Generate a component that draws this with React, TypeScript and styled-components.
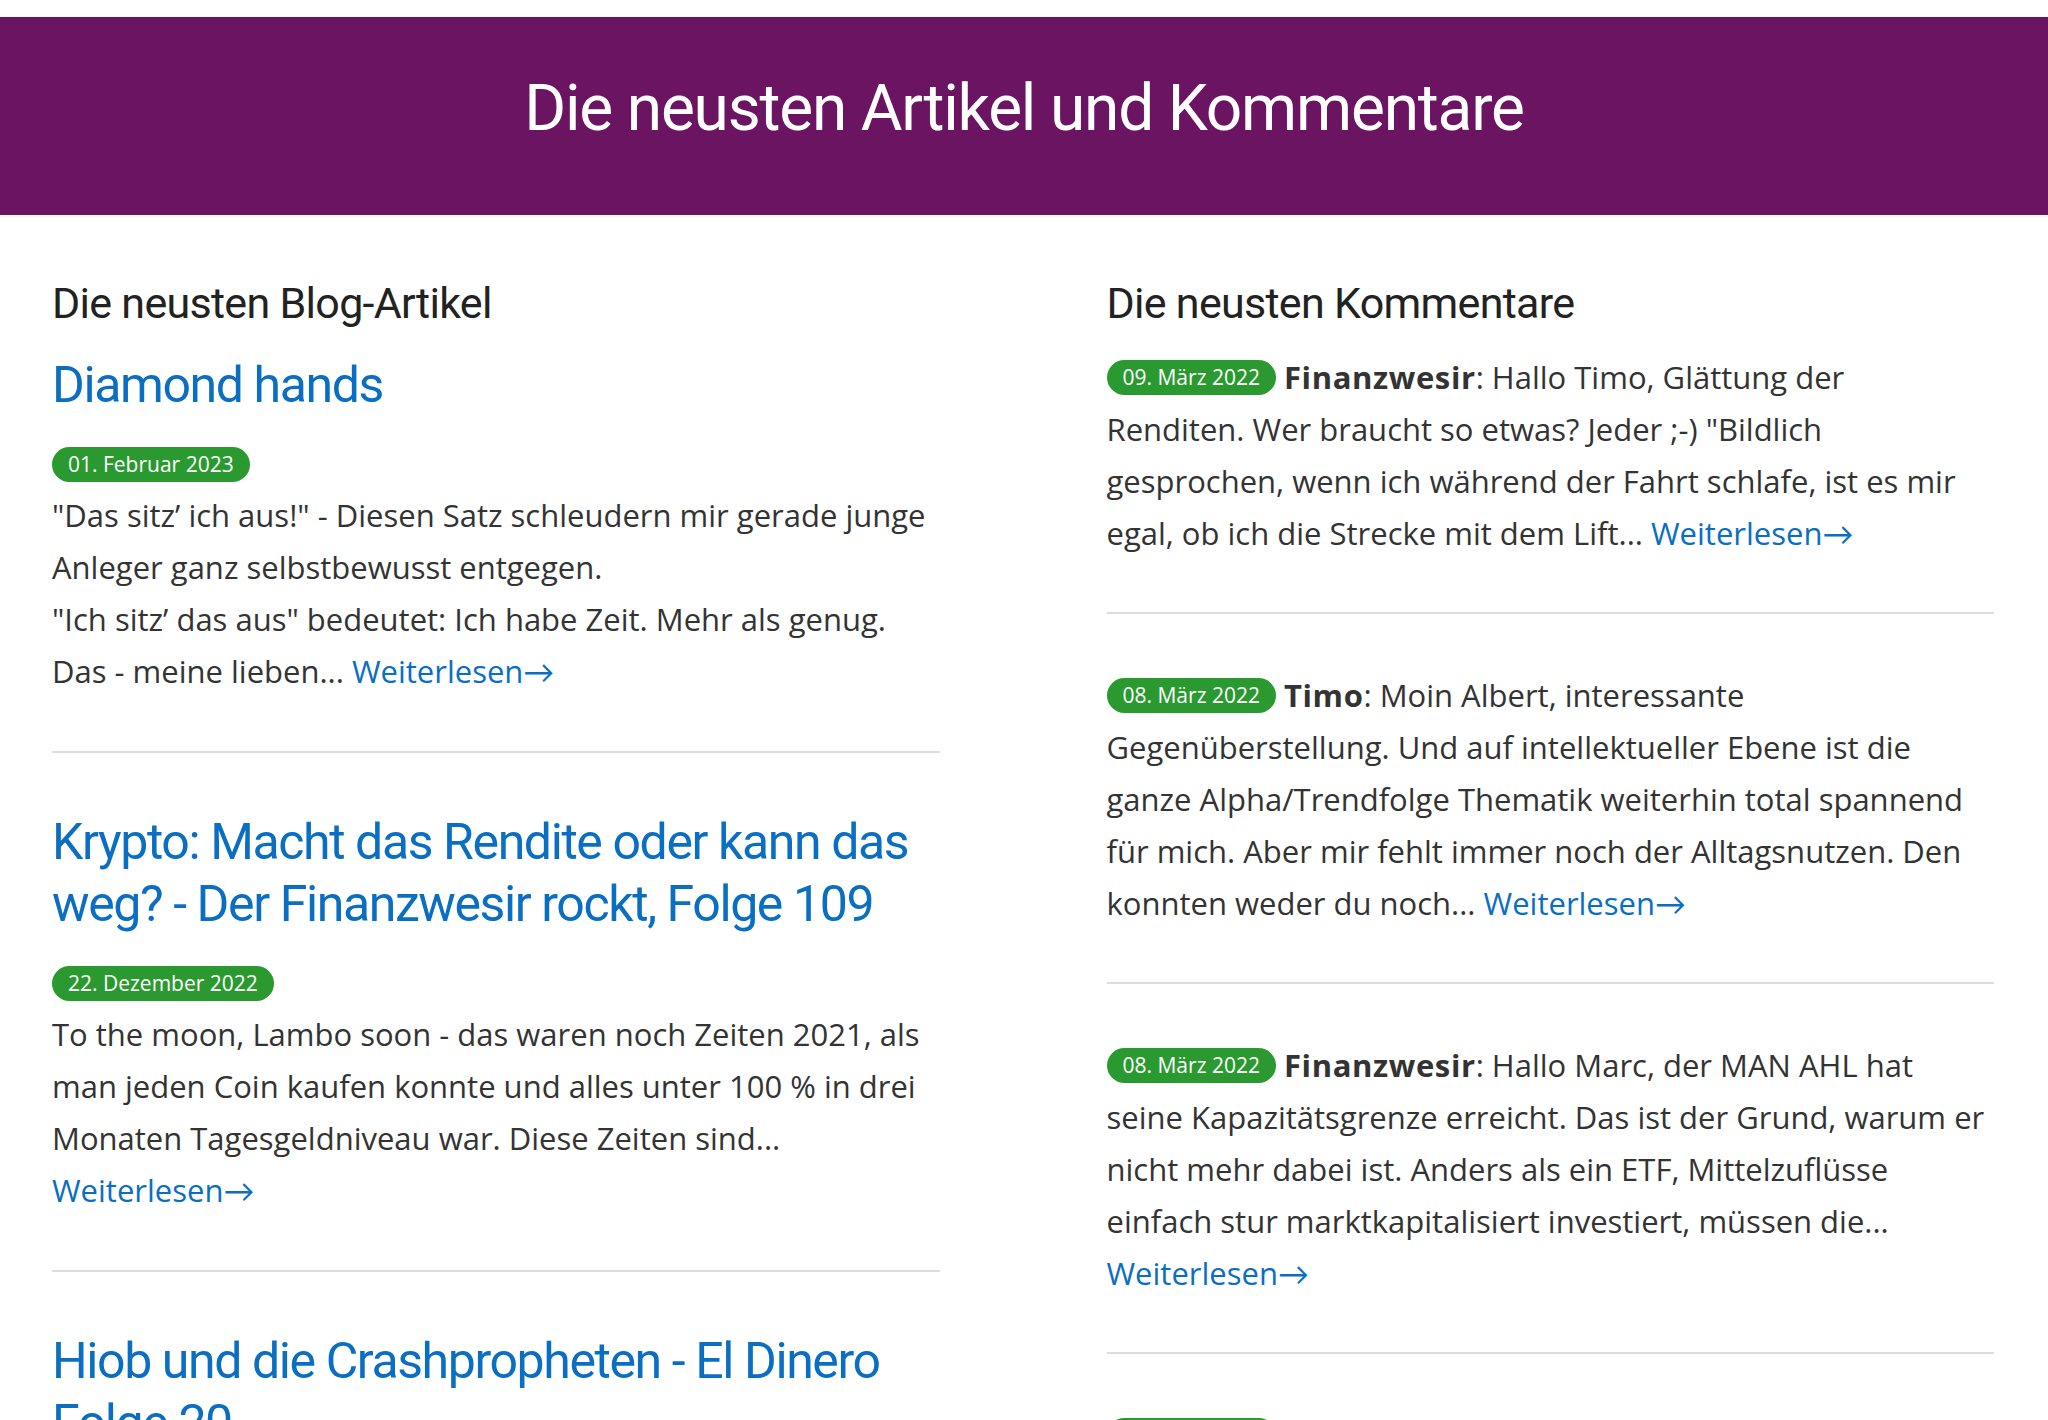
import styled, { createGlobalStyle } from 'styled-components';

const GlobalStyle = createGlobalStyle`
    html, body {
        margin: 0;
        padding: 0;
        background: #ffffff;
    }
    body {
        font-family: "Open Sans", "Noto Sans", sans-serif;
        color: #333333;
    }
`

const headingFont = `Roboto, "Liberation Sans", sans-serif`;

const Header = styled.header`
    margin-top: 17px;
    height: 198px;
    background: #6b1462;
    display: flex;
    align-items: center;
    justify-content: center;
`
const HeaderTitle = styled.h1`
    margin: 0 0 14px;
    font-family: ${headingFont};
    font-weight: 400;
    font-size: 64px;
    letter-spacing: -1.2px;
    line-height: 1.2;
    color: #ffffff;
`

const Columns = styled.main`
    display: grid;
    grid-template-columns: 1fr 1fr;
    column-gap: 167px;
    padding: 0 54px 0 52px;
    margin-top: 60px;
`
const Column = styled.section`
    display: flex;
    flex-direction: column;
`
const SectionTitle = styled.h2`
    margin: 0;
    font-family: ${headingFont};
    font-weight: 400;
    font-size: 43px;
    letter-spacing: -0.7px;
    line-height: 56px;
    color: #222222;
`

const Article = styled.article`
    padding: 23px 0 54px;
    border-bottom: 2px solid #dddddd;
    & + & {
        padding-top: 58px;
    }
`
const ArticleTitle = styled.h3`
    margin: 0 0 31px;
    font-family: ${headingFont};
    font-weight: 400;
    font-size: 50px;
    letter-spacing: -1.4px;
    line-height: 62px;
    color: #0a6ec3;
`
const DateBadge = styled.span`
    display: inline-flex;
    align-items: center;
    height: 35px;
    padding: 0 16px;
    border-radius: 18px;
    background: #2a9a30;
    color: #ffffff;
    font-size: 21px;
    line-height: 1;
    vertical-align: 4px;
`
const BadgeRow = styled.div`
    margin-bottom: 7px;
`
const Text = styled.p`
    margin: 0;
    font-size: 31px;
    line-height: 52px;
    color: #333333;
`
const MoreLink = styled.a`
    color: #0a6ec3;
    text-decoration: none;
`
const Arrow = styled.span`
    font-family: Lato, "DejaVu Sans", sans-serif;
`

const Comment = styled.div`
    padding: 20px 0 53px;
    border-bottom: 2px solid #dddddd;
    & + & {
        padding-top: 55px;
    }
    ${Text} {
        padding-right: 9px;
    }
`
const Author = styled.strong`
    font-weight: 700;
    letter-spacing: 0.02em;
    margin-left: 8px;
`

type ArticleType = {
    title: string
    date: string
    paragraphs: string[]
}

type CommentType = {
    date: string
    author: string
    text: string
}

const articles: ArticleType[] = [
    {
        title: 'Diamond hands',
        date: '01. Februar 2023',
        paragraphs: [
            '"Das sitz’ ich aus!" - Diesen Satz schleudern mir gerade junge Anleger ganz selbstbewusst entgegen.',
            '"Ich sitz’ das aus" bedeutet: Ich habe Zeit. Mehr als genug. Das - meine lieben...',
        ],
    },
    {
        title: 'Krypto: Macht das Rendite oder kann das weg? - Der Finanzwesir rockt, Folge 109',
        date: '22. Dezember 2022',
        paragraphs: [
            'To the moon, Lambo soon - das waren noch Zeiten 2021, als man jeden Coin kaufen konnte und alles unter 100 % in drei Monaten Tagesgeldniveau war. Diese Zeiten sind...',
        ],
    },
    {
        title: 'Hiob und die Crashpropheten - El Dinero Folge 20',
        date: '08. Dezember 2022',
        paragraphs: [
            'Wenn die Kurse fallen, haben die Crashpropheten Hochkonjunktur. Sie wissen immer schon vorher, dass alles schiefgeht...',
        ],
    },
]

const comments: CommentType[] = [
    {
        date: '09. März 2022',
        author: 'Finanzwesir',
        text: 'Hallo Timo, Glättung der Renditen. Wer braucht so etwas? Jeder ;-) "Bildlich gesprochen, wenn ich während der Fahrt schlafe, ist es mir egal, ob ich die Strecke mit dem Lift...',
    },
    {
        date: '08. März 2022',
        author: 'Timo',
        text: 'Moin Albert, interessante Gegenüberstellung. Und auf intellektueller Ebene ist die ganze Alpha/Trendfolge Thematik weiterhin total spannend für mich. Aber mir fehlt immer noch der Alltagsnutzen. Den konnten weder du noch...',
    },
    {
        date: '08. März 2022',
        author: 'Finanzwesir',
        text: 'Hallo Marc, der MAN AHL hat seine Kapazitätsgrenze erreicht. Das ist der Grund, warum er nicht mehr dabei ist. Anders als ein ETF, Mittelzuflüsse einfach stur marktkapitalisiert investiert, müssen die...',
    },
    {
        date: '07. März 2022',
        author: 'Marc',
        text: 'Hallo Albert, vielen Dank für den Artikel. Mir ist aufgefallen, dass der MAN AHL nicht mehr in der Übersicht auftaucht...',
    },
]

const ReadMore = () => (
    <MoreLink href="#">
        Weiterlesen<Arrow>→</Arrow>
    </MoreLink>
)

const App = () => {
    return (
        <>
            <GlobalStyle />
            <Header>
                <HeaderTitle>Die neusten Artikel und Kommentare</HeaderTitle>
            </Header>
            <Columns>
                <Column>
                    <SectionTitle>Die neusten Blog-Artikel</SectionTitle>
                    {articles.map(article => (
                        <Article key={article.title}>
                            <ArticleTitle>{article.title}</ArticleTitle>
                            <BadgeRow>
                                <DateBadge>{article.date}</DateBadge>
                            </BadgeRow>
                            <Text>
                                {article.paragraphs.map((p, i) => (
                                    <span key={i}>
                                        {i > 0 && <br />}
                                        {p}
                                    </span>
                                ))}{' '}
                                <ReadMore />
                            </Text>
                        </Article>
                    ))}
                </Column>
                <Column>
                    <SectionTitle>Die neusten Kommentare</SectionTitle>
                    {comments.map((c, i) => (
                        <Comment key={i}>
                            <Text>
                                <DateBadge>{c.date}</DateBadge>
                                <Author>{c.author}</Author>: {c.text} <ReadMore />
                            </Text>
                        </Comment>
                    ))}
                </Column>
            </Columns>
        </>
    );
};

export default App;
